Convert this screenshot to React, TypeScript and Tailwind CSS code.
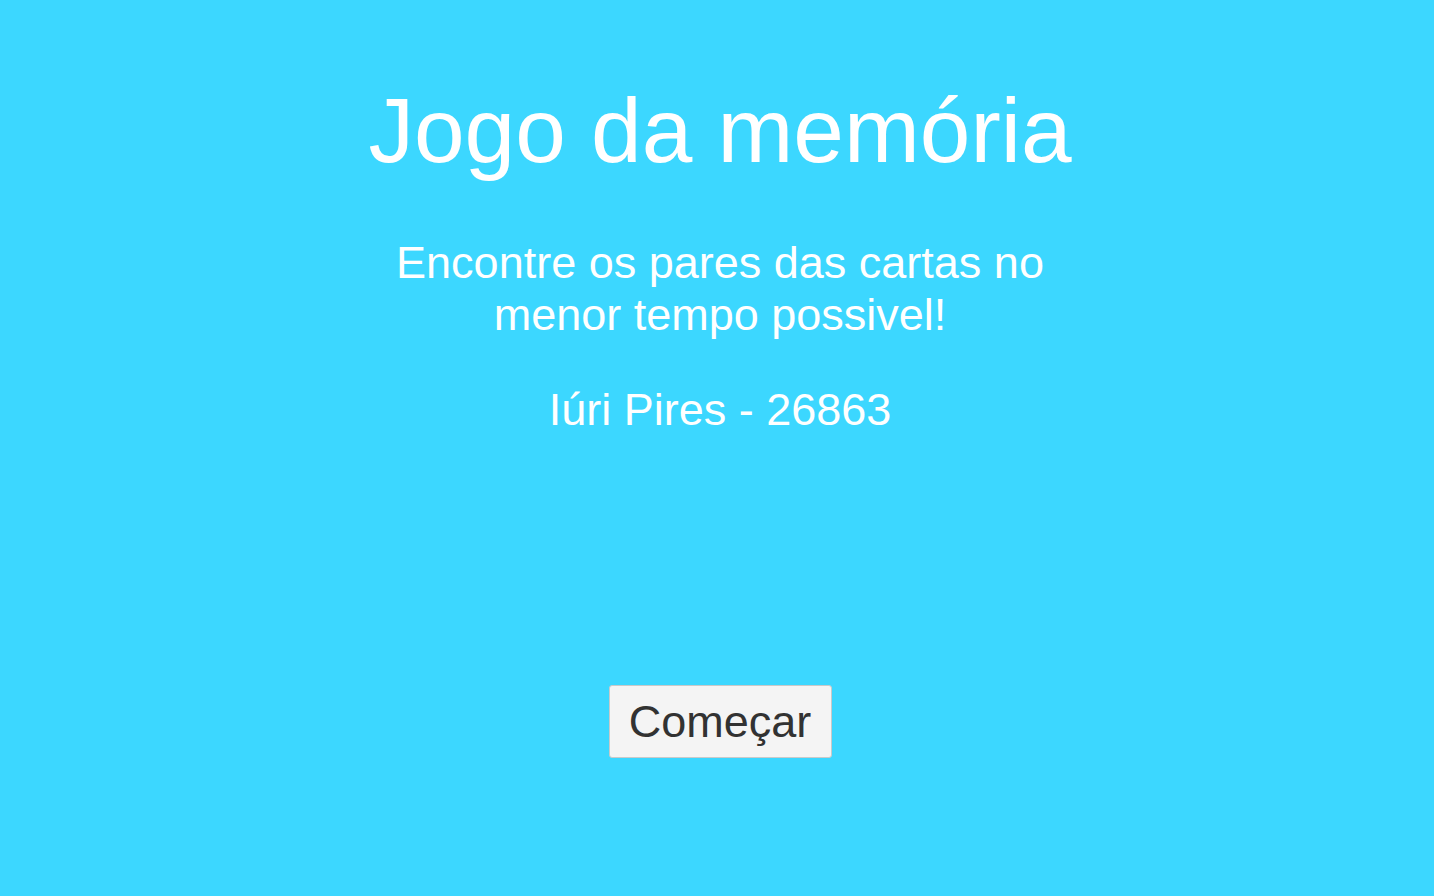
export default function App() {
  return (
    <div className="min-h-screen w-full bg-[#3cd7ff] pl-[6px] flex flex-col items-center text-center font-['Liberation_Sans',Arial,sans-serif]">
      <h1 className="mt-[86px] text-[91px] leading-[90px] text-white">Jogo da memória</h1>

      <p className="mt-[61px] w-[720px] text-[45px] leading-[52px] text-white">
        Encontre os pares das cartas no menor tempo possivel!
      </p>

      <p className="mt-[43px] text-[45px] leading-[52px] text-white">Iúri Pires - 26863</p>

      <button className="mt-[249px] w-[223px] h-[73px] flex items-center justify-center bg-[#f4f4f4] border border-[#c9c9c9] rounded-[3px] text-[45px] leading-none text-[#323232]">
        Começar
      </button>
    </div>
  )
}
